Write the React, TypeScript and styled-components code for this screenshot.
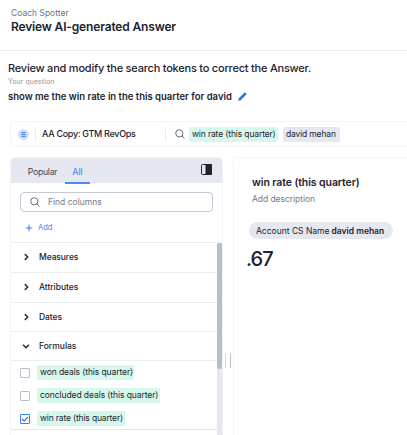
import React from "react";
import styled, { createGlobalStyle } from "styled-components";

const Global = createGlobalStyle`
  * { box-sizing: border-box; }
  html, body { margin: 0; background: #fff; overflow: hidden; }
  body { font-family: Inter, "Liberation Sans", sans-serif; color: #1d232f; }
  h1, h2, h3, p { margin: 0; }
  svg { display: block; flex: none; }
`;

const Page = styled.main`
  width: 407px;
  height: 435px;
  overflow: hidden;
  display: flex;
  flex-direction: column;
`;

const Header = styled.header`
  height: 51px;
  flex: none;
  padding: 7px 11px 0;
  border-bottom: 1px solid #eaedf2;
`;

type TextProps = {
  $size: number;
  $line: number;
  $weight?: number;
  $color?: string;
  $track?: number;
};

const Text = styled.span<TextProps>`
  display: block;
  white-space: nowrap;
  font-size: ${(p) => p.$size}px;
  line-height: ${(p) => p.$line}px;
  font-weight: ${(p) => p.$weight ?? 400};
  color: ${(p) => p.$color ?? "#1d232f"};
  letter-spacing: ${(p) => p.$track ?? 0}px;
`;

const Intro = styled.section`
  flex: none;
  height: 70px;
  padding: 9px 8px 0;
`;

const Question = styled.div`
  display: flex;
  align-items: center;
  gap: 6px;
  margin-top: 3px;
`;

const SearchBar = styled.div`
  flex: none;
  display: flex;
  align-items: center;
  height: 26px;
  margin-left: 10px;
  border: 1px solid #f3f4f7;
  border-right: 0;
  border-radius: 5px 0 0 5px;
`;

const Source = styled.div`
  display: flex;
  align-items: center;
  width: 155px;
  height: 14px;
  padding-left: 7px;
  border-right: 1px solid #eaedf2;
`;

const SourceBadge = styled.div`
  width: 11px;
  height: 11px;
  border-radius: 50%;
  background: #cfe0fd;
  display: flex;
  align-items: center;
  justify-content: center;
`;

const SourceDivider = styled.div`
  width: 1px;
  height: 14px;
  margin: 0 6px 0 6px;
  background: #eaedf2;
`;

const Tokens = styled.div`
  display: flex;
  align-items: center;
  gap: 5px;
  padding-left: 9px;
`;

const SearchSlot = styled.span`
  width: 9px;
`;

const Chip = styled.span<{ $tone: "green" | "gray"; $width: number; $track?: number }>`
  display: block;
  width: ${(p) => p.$width}px;
  height: 15px;
  padding-left: 3px;
  border-radius: 2px;
  font-size: 8.5px;
  line-height: 15px;
  white-space: nowrap;
  letter-spacing: ${(p) => p.$track ?? 0}px;
  background: ${(p) => (p.$tone === "green" ? "#d6f7ec" : "#e5e8f0")};
`;

const Workspace = styled.div`
  flex: 1;
  min-height: 0;
  display: flex;
  padding: 10px 0 0 10px;
`;

const DataPanel = styled.aside`
  width: 213px;
  display: flex;
  flex-direction: column;
  border: 1px solid #f1f3f6;
  border-bottom: 0;
  border-radius: 5px 5px 0 0;
  overflow: hidden;
`;

const Tabs = styled.div`
  height: 25px;
  flex: none;
  display: flex;
  padding: 0 10px 0 17px;
  background: #e5e8f0;
`;

const TabButton = styled.div<{ $active?: boolean; $width: number }>`
  width: ${(p) => p.$width}px;
  height: 26px;
  margin-right: ${(p) => (p.$active ? 0 : 8)}px;
  padding-top: 8px;
  display: flex;
  justify-content: center;
  border-bottom: 2px solid ${(p) => (p.$active ? "#4b8af3" : "transparent")};
`;

const PanelToggle = styled.div`
  width: 11px;
  height: 11px;
  margin: 6px 0 0 auto;
`;

const PanelTools = styled.div`
  height: 60px;
  flex: none;
  padding: 9px 0 0 9px;
  border-bottom: 1px solid #eaedf2;
`;

const FindBox = styled.div`
  display: flex;
  align-items: center;
  gap: 8px;
  width: 193px;
  height: 20px;
  padding-left: 9px;
  border: 1px solid #c3c9d5;
  border-radius: 4px;
`;

const AddRow = styled.div`
  display: flex;
  align-items: center;
  gap: 5px;
  margin: 10px 0 0 5px;
`;

const ListArea = styled.div`
  flex: 1;
  min-height: 0;
  display: flex;
`;

const Groups = styled.div`
  flex: 1;
`;

const GroupRow = styled.div<{ $height: number }>`
  display: flex;
  align-items: center;
  gap: 8px;
  height: ${(p) => p.$height}px;
  padding: 0 0 1px 10px;
  border-bottom: 1px solid #eaedf2;
`;

const Columns = styled.div`
  display: flex;
  flex-direction: column;
  gap: 8px;
  height: 69px;
  padding: 4px 0 0 9px;
  border-bottom: 1px solid #e3e6ec;
`;

const ColumnRow = styled.div`
  display: flex;
  align-items: center;
  gap: 7px;
`;

const Box = styled.span<{ $checked?: boolean }>`
  width: 10px;
  height: 10px;
  display: flex;
  border: 1px solid ${(p) => (p.$checked ? "#3b7ff2" : "#b9c0ce")};
  border-radius: 1px;
`;

const ScrollTrack = styled.div`
  width: 5px;
  background: #e5e8f0;
`;

const ScrollThumb = styled.div`
  height: 126px;
  border-radius: 2px;
  background: #b7bfce;
`;

const Handle = styled.div`
  width: 10px;
  display: flex;
  gap: 4px;
  padding: 196px 0 0 2px;
`;

const Grip = styled.span<{ $color: string }>`
  width: 1px;
  height: 15px;
  background: ${(p) => p.$color};
`;

const Answer = styled.section`
  flex: 1;
  padding: 17px 0 0 18px;
  border: 1px solid #f3f4f7;
  border-width: 1px 0 0 1px;
  border-radius: 5px 0 0 0;
`;

const Description = styled.div`
  margin-top: 3px;
`;

const FilterPill = styled.div`
  display: flex;
  align-items: center;
  gap: 2px;
  width: 144px;
  height: 17px;
  margin: 16px 0 0 -3px;
  padding-left: 7px;
  border-radius: 9px;
  background: #e5e8f0;
`;

const Metric = styled.div`
  margin: 8px 0 0 -6px;
`;

const SearchIcon = () => (
  <svg width="10" height="10" viewBox="0 0 10 10" fill="none" stroke="#646d7e" strokeWidth="1">
    <circle cx="4.3" cy="4.3" r="3.6" />
    <path d="M7 7l2.5 2.5" />
  </svg>
);

const Chevron = ({ open }: { open?: boolean }) => (
  <svg width="10" height="10" viewBox="0 0 10 10" fill="none" stroke="#2d3442" strokeWidth="1.5">
    <path d={open ? "M2 3.8L5 6.6 8 3.8" : "M3.8 2.1L6.7 5 3.8 7.9"} />
  </svg>
);

const groups = [
  { name: "Measures", height: 30, track: -0.1 },
  { name: "Attributes", height: 30, track: -0.05 },
  { name: "Dates", height: 29, track: -0.05 },
  { name: "Formulas", height: 29, track: 0, open: true },
];

const columns = [
  { name: "won deals (this quarter)", width: 97, track: -0.1 },
  { name: "concluded deals (this quarter)", width: 123, track: -0.08 },
  { name: "win rate (this quarter)", width: 88, track: -0.16, checked: true },
];

export default function App() {
  return (
    <>
      <Global />
      <Page>
        <Header>
          <Text $size={8.5} $line={12} $color="#6b7484">Coach Spotter</Text>
          <Text as="h1" $size={12} $line={16} $weight={560} $track={-0.16}>Review AI-generated Answer</Text>
        </Header>
        <Intro>
          <Text as="h2" $size={11} $line={16} $weight={550} $track={-0.22}>
            Review and modify the search tokens to correct the Answer.
          </Text>
          <Text $size={7} $line={11} $color="#8d95a4" $track={0.05}>Your question</Text>
          <Question>
            <Text $size={9.5} $line={13} $weight={600}>show me the win rate in the this quarter for david</Text>
            <svg width="9" height="9" viewBox="0 0 9 9" fill="#2770ef">
              <path d="M.2 8.8l.6-2.6L6.4.7q.6-.5 1.1 0l.8.8q.5.5 0 1.1L2.7 8.2z" />
            </svg>
          </Question>
        </Intro>
        <SearchBar>
          <Source>
            <SourceBadge>
              <svg width="5" height="5" viewBox="0 0 5 5" fill="#4b8af3">
                <path d="M.3 0h4.4v1.2H.3zM.3 1.9h4.4v1.2H.3zM.3 3.8h4.4V5H.3z" />
              </svg>
            </SourceBadge>
            <SourceDivider />
            <Text $size={9} $line={14} $weight={550} $track={-0.3}>AA Copy: GTM RevOps</Text>
          </Source>
          <Tokens>
            <SearchSlot><SearchIcon /></SearchSlot>
            <Chip $tone="green" $width={89} $track={-0.13}>win rate (this quarter)</Chip>
            <Chip $tone="gray" $width={57} $track={-0.16}>david mehan</Chip>
          </Tokens>
        </SearchBar>
        <Workspace>
          <DataPanel>
            <Tabs>
              <TabButton $width={29}>
                <Text $size={8.7} $line={12} $color="#3f4756" $track={-0.25}>Popular</Text>
              </TabButton>
              <TabButton $width={25} $active>
                <Text $size={9} $line={12} $color="#3b7ff2">All</Text>
              </TabButton>
              <PanelToggle>
                <svg width="11" height="11" viewBox="0 0 11 11">
                  <rect x=".5" y=".5" width="10" height="10" rx="1" fill="#e5e8f0" stroke="#1d232f" />
                  <path d="M4.5 0H10q1 0 1 1v9q0 1-1 1H4.5z" fill="#1d232f" />
                </svg>
              </PanelToggle>
            </Tabs>
            <PanelTools>
              <FindBox>
                <SearchIcon />
                <Text $size={8.5} $line={12} $color="#727b8b">Find columns</Text>
              </FindBox>
              <AddRow>
                <svg width="8" height="8" viewBox="0 0 8 8" stroke="#3b7ff2" strokeWidth="1.1">
                  <path d="M4 .7v6.6M.7 4h6.6" />
                </svg>
                <Text $size={7.5} $line={12} $color="#3b7ff2">Add</Text>
              </AddRow>
            </PanelTools>
            <ListArea>
              <Groups>
                {groups.map((g) => (
                  <GroupRow key={g.name} $height={g.height}>
                    <Chevron open={g.open} />
                    <Text $size={8.5} $line={12} $weight={500} $track={g.track}>{g.name}</Text>
                  </GroupRow>
                ))}
                <Columns>
                  {columns.map((c) => (
                    <ColumnRow key={c.name}>
                      <Box $checked={c.checked}>
                        {c.checked && (
                          <svg width="8" height="8" viewBox="0 0 8 8" fill="none" stroke="#2770ef" strokeWidth="1.2">
                            <path d="M1.2 4l2 2 3.6-3.9" />
                          </svg>
                        )}
                      </Box>
                      <Chip $tone="green" $width={c.width} $track={c.track}>{c.name}</Chip>
                    </ColumnRow>
                  ))}
                </Columns>
              </Groups>
              <ScrollTrack>
                <ScrollThumb />
              </ScrollTrack>
            </ListArea>
          </DataPanel>
          <Handle>
            <Grip $color="#d5dae3" />
            <Grip $color="#b7bfce" />
          </Handle>
          <Answer>
            <Text as="h3" $size={10.5} $line={15} $weight={600} $track={-0.09}>win rate (this quarter)</Text>
            <Description>
              <Text $size={8.5} $line={13} $color="#727b8b" $track={-0.05}>Add description</Text>
            </Description>
            <FilterPill>
              <Text $size={8.5} $line={14}>Account CS Name</Text>
              <Text $size={8.5} $line={14} $weight={600}>david mehan</Text>
            </FilterPill>
            <Metric>
              <Text $size={20} $line={24} $weight={550} $track={-1}>.67</Text>
            </Metric>
          </Answer>
        </Workspace>
      </Page>
    </>
  );
}
